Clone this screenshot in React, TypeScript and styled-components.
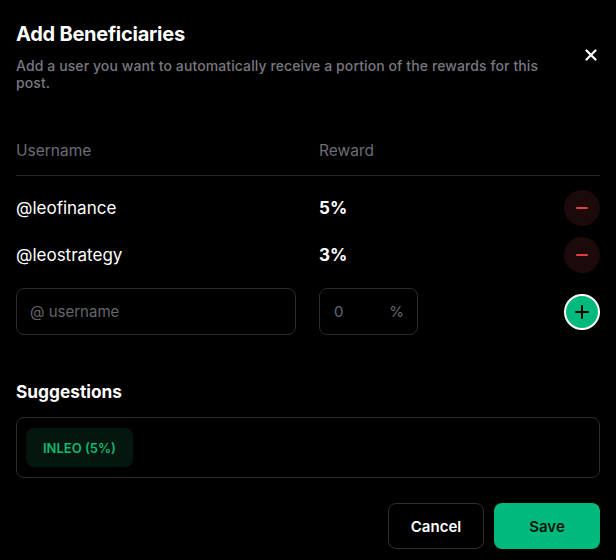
import React, { useState } from 'react';
import styled, { createGlobalStyle } from 'styled-components';

const GlobalStyle = createGlobalStyle`
	html, body {
		margin: 0;
		padding: 0;
		background: #000;
	}
	body {
		font-family: Inter, 'Noto Sans', sans-serif;
		color: #fff;
	}
	* {
		box-sizing: border-box;
	}
`;

const Modal = styled.div`
	width: 616px;
	height: 560px;
	padding: 20px 16px 10px;
	background: #000;
	display: flex;
	flex-direction: column;
`;

const Header = styled.div`
	display: flex;
	justify-content: space-between;
	align-items: center;
`;

const HeaderText = styled.div`
	max-width: 550px;
`;

const Title = styled.h2`
	margin: 0;
	font-size: 20px;
	line-height: 28px;
	font-weight: 700;
	letter-spacing: -0.25px;
	color: #fff;
`;

const Subtitle = styled.p`
	margin: 9px 0 0;
	font-size: 14px;
	line-height: 17px;
	font-weight: 500;
	letter-spacing: 0.1px;
	color: #78787f;
`;

const CloseButton = styled.button`
	background: none;
	border: none;
	padding: 0;
	margin-right: 2px;
	margin-top: -2px;
	width: 14px;
	height: 14px;
	display: flex;
	align-items: center;
	justify-content: center;
	cursor: pointer;
`;

const Grid = styled.div`
	display: grid;
	grid-template-columns: 280px 1fr auto;
	column-gap: 23px;
	align-items: center;
`;

const HeadRow = styled(Grid)`
	margin-top: 49px;
	padding-bottom: 13px;
	border-bottom: 1px solid #262628;
`;

const HeadCell = styled.span`
	font-size: 15.5px;
	line-height: 22px;
	color: #6d6d74;
`;

const Row = styled(Grid)`
	margin-top: 14px;
	& + & {
		margin-top: 11px;
	}
`;

const UserCell = styled.span`
	font-size: 17px;
	color: #fff;
`;

const RewardCell = styled.span`
	font-size: 17px;
	font-weight: 700;
	color: #fff;
`;

const RoundButton = styled.button<{ variant: 'remove' | 'add' }>`
	width: 36px;
	height: 36px;
	border-radius: 50%;
	padding: 0;
	display: flex;
	align-items: center;
	justify-content: center;
	cursor: pointer;
	border: ${(p) => (p.variant === 'add' ? '2px solid #fff' : 'none')};
	background: ${(p) => (p.variant === 'add' ? '#00b97c' : '#1c0909')};
`;

const InputRow = styled(Grid)`
	margin-top: 15px;
`;

const TextInput = styled.input`
	height: 47px;
	width: 100%;
	background: transparent;
	border: 1px solid #2c2c2e;
	border-radius: 8px;
	padding: 0 13px;
	font-family: inherit;
	font-size: 15px;
	color: #fff;
	outline: none;
	&::placeholder {
		color: #66666d;
	}
`;

const RewardBox = styled.label`
	height: 47px;
	width: 99px;
	border: 1px solid #2c2c2e;
	border-radius: 8px;
	display: flex;
	align-items: center;
	padding: 0 13px 0 14px;
	font-size: 15px;
	color: #66666d;
`;

const RewardInput = styled.input`
	width: 100%;
	background: transparent;
	border: none;
	outline: none;
	font-family: inherit;
	font-size: 15px;
	color: #fff;
	padding: 0;
	&::placeholder {
		color: #5f6a7a;
	}
`;

const SectionTitle = styled.h3`
	margin: 45px 0 0;
	font-size: 17.3px;
	line-height: 24px;
	font-weight: 700;
	color: #fff;
`;

const SuggestionBox = styled.div`
	margin-top: 13px;
	border: 1px solid #2c2c2e;
	border-radius: 8px;
	padding: 10px 9px;
	display: flex;
	gap: 8px;
`;

const Chip = styled.button`
	height: 39px;
	padding: 0 17px;
	border: none;
	border-radius: 8px;
	background: #03170f;
	color: #12b872;
	font-family: inherit;
	font-size: 13px;
	font-weight: 600;
	cursor: pointer;
`;

const Footer = styled.div`
	margin-top: 25px;
	display: flex;
	justify-content: flex-end;
	gap: 10px;
`;

const ActionButton = styled.button<{ primary?: boolean }>`
	height: 46px;
	width: ${(p) => (p.primary ? '106px' : '96px')};
	border-radius: 8px;
	font-family: inherit;
	font-size: 15px;
	font-weight: 600;
	cursor: pointer;
	border: ${(p) => (p.primary ? 'none' : '1px solid #2e2e30')};
	background: ${(p) => (p.primary ? '#00b97c' : '#000')};
	color: ${(p) => (p.primary ? '#07140e' : '#fff')};
`;

const beneficiaries = [
	{ user: '@leofinance', reward: 5 },
	{ user: '@leostrategy', reward: 3 },
];

const App = () => {
	const [list] = useState(beneficiaries);
	return (
		<>
			<GlobalStyle />
			<Modal>
				<Header>
					<HeaderText>
						<Title>Add Beneficiaries</Title>
						<Subtitle>Add a user you want to automatically receive a portion of the rewards for this post.</Subtitle>
					</HeaderText>
					<CloseButton aria-label='close'>
						<svg width='12' height='12' viewBox='0 0 12 12'>
							<path d='M1.5 1.5 L10.5 10.5 M10.5 1.5 L1.5 10.5' stroke='#fff' strokeWidth='2.2' strokeLinecap='round' />
						</svg>
					</CloseButton>
				</Header>

				<HeadRow>
					<HeadCell>Username</HeadCell>
					<HeadCell>Reward</HeadCell>
					<span />
				</HeadRow>

				{list.map((b) => (
					<Row key={b.user}>
						<UserCell>{b.user}</UserCell>
						<RewardCell>{b.reward}%</RewardCell>
						<RoundButton variant='remove' aria-label='remove'>
							<svg width='14' height='4' viewBox='0 0 14 4'>
								<rect x='1' y='1' width='12' height='2' rx='1' fill='#e0413f' />
							</svg>
						</RoundButton>
					</Row>
				))}

				<InputRow>
					<TextInput placeholder='@ username' />
					<RewardBox>
						<RewardInput placeholder='0' />
						<span>%</span>
					</RewardBox>
					<RoundButton variant='add' aria-label='add'>
						<svg width='16' height='16' viewBox='0 0 16 16'>
							<path d='M8 2 V14 M2 8 H14' stroke='#000' strokeWidth='2' strokeLinecap='round' />
						</svg>
					</RoundButton>
				</InputRow>

				<SectionTitle>Suggestions</SectionTitle>
				<SuggestionBox>
					<Chip>INLEO (5%)</Chip>
				</SuggestionBox>

				<Footer>
					<ActionButton>Cancel</ActionButton>
					<ActionButton primary>Save</ActionButton>
				</Footer>
			</Modal>
		</>
	);
};

export default App;
